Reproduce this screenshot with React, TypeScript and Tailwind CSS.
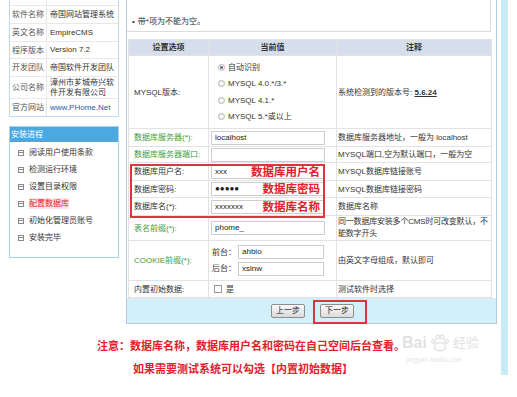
const infoRows: [string, string, string][] = [
  ['软件名称', '帝国网站管理系统', 'h-[18px]'],
  ['英文名称', 'EmpireCMS', 'h-[18px]'],
  ['程序版本', 'Version 7.2', 'h-[17px]'],
  ['开发团队', '帝国软件开发团队', 'h-[18px]'],
  ['公司名称', '漳州市芗城帝兴软件开发有限公司', 'h-[22px]'],
  ['官方网站', 'www.PHome.Net', 'h-[18px]'],
];

const steps = ['阅读用户使用条款', '检测运行环境', '设置目录权限', '配置数据库', '初始化管理员账号', '安装完毕'];

const td = 'border border-[#e2e2e2] p-0 align-middle';

function Field({ value = '', w = 'w-[114px]' }: { value?: string; w?: string }) {
  return (
    <div className={`${w} h-[14px] border border-[#cdcdcd] bg-white px-[3px] leading-[12px] text-[8px] text-[#222]`}>
      {value}
    </div>
  );
}

function Radio({ on, label }: { on?: boolean; label: string }) {
  return (
    <div className="flex h-[16.5px] items-center gap-[3px]">
      <span className="flex h-[7px] w-[7px] items-center justify-center rounded-full border border-[#b4b4b4] bg-[#f4f4f4]">
        {on && <span className="h-[3px] w-[3px] rounded-full bg-[#5d6f86]" />}
      </span>
      <span>{label}</span>
    </div>
  );
}

function Sidebar() {
  return (
    <div className="ml-[9px] w-[110px] shrink-0">
      {/* 软件信息 */}
      <div className="border-x border-b border-[#bfdcec]">
        <div className="flex h-[5px]">
          <div className="w-[37px] border-r border-[#e6e6e6]" />
        </div>
        {infoRows.map(([k, v, h]) => (
          <div key={k} className={`flex border-t border-[#e8e8e8] ${h}`}>
            <div className="flex w-[37px] shrink-0 items-center border-r border-[#e6e6e6] pl-[2px] text-[#555]">{k}</div>
            <div className={`flex flex-1 items-center pl-[3px] leading-[10px] ${k === '官方网站' ? 'text-[#1f5aa6]' : 'text-[#333]'}`}>
              {v}
            </div>
          </div>
        ))}
      </div>

      {/* 安装进程 */}
      <div className="mt-[9px] border border-[#a9d2ea]">
        <div className="flex h-[15px] items-center bg-[#4ea8e0] pl-[1px] text-white">安装进程</div>
        <div className="pb-[11px] pt-[2px]">
          {steps.map((s) => (
            <div key={s} className="flex h-[17px] items-center gap-[5px] pl-[8px]">
              <span className="flex h-[6px] w-[6px] items-center justify-center border border-[#8a8a8a]">
                <span className="h-[1px] w-[4px] bg-[#8a8a8a]" />
              </span>
              <span className={s === '配置数据库' ? 'bg-[#fde3e3] text-[#e2262b]' : 'text-[#333]'}>{s}</span>
            </div>
          ))}
        </div>
      </div>
    </div>
  );
}

function Main() {
  const green = 'text-[#3f9c3f]';
  return (
    <div className="ml-[7px] w-[371px] shrink-0 border-x border-b border-[#b3cddc]">
      {/* 提示 */}
      <div className="mr-[5px] flex h-[32px] items-end border-b border-r border-[#dcdcdc] pb-[4px] pl-[5px]">
        <span className="mr-[3px]">•</span>带*项为不能为空。
      </div>

      {/* 设置表 */}
      <div className="relative ml-[1px] mt-[7px] w-[364px]">
        <table className="w-[364px] table-fixed border-collapse">
          <colgroup>
            <col className="w-[80px]" />
            <col className="w-[128px]" />
            <col />
          </colgroup>
          <tbody>
            <tr className="h-[16px] bg-[#d6ddeb] font-bold">
              <td className={`${td} text-center`}>设置选项</td>
              <td className={`${td} text-center`}>当前值</td>
              <td className={`${td} text-center`}>注释</td>
            </tr>
            <tr className="h-[73px]">
              <td className={`${td} pl-[5px]`}>MYSQL版本:</td>
              <td className={`${td} pl-[9px]`}>
                <Radio on label="自动识别" />
                <Radio label="MYSQL 4.0.*/3.*" />
                <Radio label="MYSQL 4.1.*" />
                <Radio label="MYSQL 5.*或以上" />
              </td>
              <td className={`${td} pl-[1px]`}>
                系统检测到的版本号: <b className="underline">5.6.24</b>
              </td>
            </tr>
            <tr className="h-[18px]">
              <td className={`${td} pl-[5px] ${green}`}>数据库服务器(*):</td>
              <td className={`${td} pl-[2px]`}>
                <Field value="localhost" />
              </td>
              <td className={`${td} pl-[1px]`}>数据库服务器地址，一般为 localhost</td>
            </tr>
            <tr className="h-[16px]">
              <td className={`${td} pl-[5px] ${green}`}>数据库服务器端口:</td>
              <td className={`${td} pl-[2px]`}>
                <Field />
              </td>
              <td className={`${td} pl-[1px]`}>MYSQL端口,空为默认端口，一般为空</td>
            </tr>
            <tr className="h-[18px]">
              <td className={`${td} pl-[5px]`}>数据库用户名:</td>
              <td className={`${td} pl-[2px]`}>
                <div className="relative">
                  <Field value="xxx" />
                  <span className="absolute right-[16px] top-1/2 -translate-y-1/2 whitespace-nowrap text-[11.5px] font-bold leading-[14px] text-[#e3202b]">
                    数据库用户名
                  </span>
                </div>
              </td>
              <td className={`${td} pl-[1px]`}>MYSQL数据库链接账号</td>
            </tr>
            <tr className="h-[17px]">
              <td className={`${td} pl-[5px]`}>数据库密码:</td>
              <td className={`${td} pl-[2px]`}>
                <div className="relative">
                  <Field value="●●●●●" />
                  <span className="absolute right-[16px] top-1/2 -translate-y-1/2 whitespace-nowrap text-[11.5px] font-bold leading-[14px] text-[#e3202b]">
                    数据库密码
                  </span>
                </div>
              </td>
              <td className={`${td} pl-[1px]`}>MYSQL数据库链接密码</td>
            </tr>
            <tr className="h-[18px]">
              <td className={`${td} pl-[5px]`}>数据库名(*):</td>
              <td className={`${td} pl-[2px]`}>
                <div className="relative">
                  <Field value="xxxxxxx" />
                  <span className="absolute right-[16px] top-1/2 -translate-y-1/2 whitespace-nowrap text-[11.5px] font-bold leading-[14px] text-[#e3202b]">
                    数据库名称
                  </span>
                </div>
              </td>
              <td className={`${td} pl-[1px]`}>数据库名称</td>
            </tr>
            <tr className="h-[25px]">
              <td className={`${td} pl-[5px] ${green}`}>表名前缀(*):</td>
              <td className={`${td} pl-[2px]`}>
                <Field value="phome_" />
              </td>
              <td className={`${td} pl-[1px] leading-[12px] tracking-[-0.2px]`}>同一数据库安装多个CMS时可改变默认，不能数字开头</td>
            </tr>
            <tr className="h-[40px]">
              <td className={`${td} pl-[5px] ${green}`}>COOKIE前缀(*):</td>
              <td className={`${td} pl-[3px]`}>
                <div className="flex h-[16.5px] items-center">
                  <span className="w-[26px]">前台：</span>
                  <Field value="ahbio" w="w-[86px]" />
                </div>
                <div className="flex h-[16.5px] items-center">
                  <span className="w-[26px]">后台：</span>
                  <Field value="xslnw" w="w-[86px]" />
                </div>
              </td>
              <td className={`${td} pl-[1px]`}>由英文字母组成，默认即可</td>
            </tr>
            <tr className="h-[17px]">
              <td className={`${td} pl-[5px]`}>内置初始数据:</td>
              <td className={`${td} pl-[5px]`}>
                <div className="flex items-center gap-[4px]">
                  <span className="h-[8px] w-[8px] border border-[#9a9a9a] bg-white" />
                  <span>是</span>
                </div>
              </td>
              <td className={`${td} pl-[1px]`}>测试软件时选择</td>
            </tr>
          </tbody>
        </table>

        {/* 红框标注 */}
        <div className="absolute left-[2px] top-[125px] h-[54px] w-[195px] border-2 border-[#d9363e]" />
      </div>

      {/* 按钮栏 */}
      <div className="relative flex h-[25px] items-center gap-[15px] bg-[#d3effa] pl-[144px]">
        <button className="h-[14px] w-[34px] rounded-[2px] border border-[#8e8e8e] bg-gradient-to-b from-[#fafafa] to-[#d9d9d9] text-[8px] leading-[12px] text-[#222]">
          上一步
        </button>
        <button className="h-[14px] w-[34px] rounded-[2px] border border-[#8e8e8e] bg-gradient-to-b from-[#fafafa] to-[#dcdcdc] text-[8px] leading-[12px] text-[#222]">
          下一步
        </button>
        <div className="absolute left-[186px] top-[2px] h-[24px] w-[54px] border-2 border-[#d9363e]" />
      </div>
    </div>
  );
}

export default function App() {
  return (
    <div className="relative h-[397px] w-[517px] overflow-hidden bg-white font-['Liberation_Sans','Noto_Sans_CJK_SC',sans-serif] text-[8px] leading-[11px] text-[#333]">
      <div className="flex">
        <div className="flex w-[501px] flex-col">
          <div className="flex items-start">
            <Sidebar />
            <Main />
          </div>

          {/* 注意 */}
          <div className="mt-[11px] pl-[97px] text-[11px] font-bold leading-[23px] text-[#e3202b]">
            <div className="whitespace-nowrap">注意：数据库名称，数据库用户名和密码在自己空间后台查看。</div>
            <div className="whitespace-nowrap pl-[36px]">如果需要测试系统可以勾选【内置初始数据】</div>
          </div>
        </div>
        <div className="h-[375px] w-[7px] bg-[#c7ebf7]" />
      </div>

      {/* 水印 */}
      <div className="absolute left-[402px] top-[333px] flex items-center gap-[2px] text-[#e2e2e2]">
        <span className="text-[16px] font-bold leading-[20px]">Bai</span>
        <svg width="22" height="20" viewBox="0 0 24 20" fill="none" stroke="#e2e2e2" strokeWidth="1.5">
          <ellipse cx="12" cy="14" rx="6" ry="4.5" />
          <circle cx="5" cy="8" r="2" />
          <circle cx="9.5" cy="3.5" r="2" />
          <circle cx="14.5" cy="3.5" r="2" />
          <circle cx="19" cy="8" r="2" />
        </svg>
        <span className="text-[13px] leading-[20px]">经验</span>
      </div>
      <div className="absolute left-[406px] top-[355px] text-[7px] leading-[9px] text-[#e6e6e6]">jingyan.baidu.com</div>
    </div>
  );
}
